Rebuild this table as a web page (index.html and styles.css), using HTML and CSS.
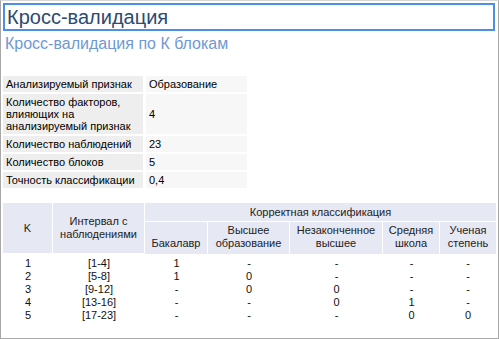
FILE: index.html
```html
<!DOCTYPE html>
<html>
<head>
<meta charset="utf-8">
<link rel="stylesheet" href="styles.css">
</head>
<body>
<div class="frame">
  <div class="title">Кросс-валидация</div>
  <div class="subtitle">Кросс-валидация по К блокам</div>
  <table class="info">
    <tr><td class="lbl">Анализируемый признак</td><td class="val">Образование</td></tr>
    <tr><td class="lbl">Количество факторов, влияющих на анализируемый признак</td><td class="val">4</td></tr>
    <tr><td class="lbl">Количество наблюдений</td><td class="val">23</td></tr>
    <tr><td class="lbl">Количество блоков</td><td class="val">5</td></tr>
    <tr><td class="lbl">Точность классификации</td><td class="val">0,4</td></tr>
  </table>
  <table class="data">
    <thead>
      <tr>
        <th rowspan="2" class="c-k">K</th>
        <th rowspan="2" class="c-int">Интервал с наблюдениями</th>
        <th colspan="5" class="grp">Корректная классификация</th>
      </tr>
      <tr>
        <th class="c-b">Бакалавр</th>
        <th class="c-v">Высшее образование</th>
        <th class="c-n">Незаконченное высшее</th>
        <th class="c-s">Средняя школа</th>
        <th class="c-u">Ученая степень</th>
      </tr>
    </thead>
    <tbody>
      <tr class="first"><td>1</td><td>[1-4]</td><td>1</td><td>-</td><td>-</td><td>-</td><td>-</td></tr>
      <tr><td>2</td><td>[5-8]</td><td>1</td><td>0</td><td>-</td><td>-</td><td>-</td></tr>
      <tr><td>3</td><td>[9-12]</td><td>-</td><td>0</td><td>0</td><td>-</td><td>-</td></tr>
      <tr><td>4</td><td>[13-16]</td><td>-</td><td>-</td><td>0</td><td>1</td><td>-</td></tr>
      <tr><td>5</td><td>[17-23]</td><td>-</td><td>-</td><td>-</td><td>0</td><td>0</td></tr>
    </tbody>
  </table>
</div>
</body>
</html>
```
FILE: styles.css
```css
html, body {
  margin: 0;
  padding: 0;
  background: #ffffff;
}
.frame {
  width: 499px;
  height: 339px;
  box-sizing: border-box;
  border: 1px solid #a8a8a8;
  border-top-color: #d8d8d8;
  padding: 2px 2px 0 2px;
  font-family: "Liberation Sans", Arial, sans-serif;
  font-size: 11px;
  color: #000;
  overflow: hidden;
}
.title {
  border: 2px solid #4a90e8;
  height: 24px;
  line-height: 24px;
  font-size: 20px;
  color: #2c4a72;
  padding-left: 2px;
  margin-right: 1px;
}
.subtitle {
  font-size: 16px;
  color: #6f99d2;
  margin-top: 4px;
  line-height: 18px;
  padding-left: 2px;
}
.info {
  border-collapse: separate;
  border-spacing: 0 2px;
  margin-top: 21px;
}
.info td {
  padding: 2px 3px 2px 3px;
  line-height: 12px;
  vertical-align: middle;
}
.info .lbl {
  background: #eeeeee;
  width: 134px;
  border-right: 3px solid #fff;
}
.info .val {
  background: #f7f7f7;
  width: 95px;
}
.data {
  border-collapse: separate;
  border-spacing: 0;
  width: 493px;
  margin-top: 13px;
  color: #111;
}
.data th {
  background: #e6e8f4;
  font-weight: normal;
  text-align: center;
  padding: 2px 2px;
  line-height: 13px;
  color: #222;
  border-right: 1px solid #fff;
  border-bottom: 1px solid #fff;
}
.data th:last-child { border-right: none; }
.data .grp { height: 14px; }
.data thead tr:nth-child(2) th { height: 25px; vertical-align: bottom; padding-bottom: 4px; border-bottom: none; }
.c-k { width: 45px; }
.c-int { width: 87px; }
.c-b { width: 58px; }
.c-v { width: 77px; }
.c-n { width: 88px; }
.c-s { width: 52px; }
.data td {
  text-align: center;
  padding: 0;
  line-height: 13px;
}
.data tr.first td { padding-top: 3px; }
```
